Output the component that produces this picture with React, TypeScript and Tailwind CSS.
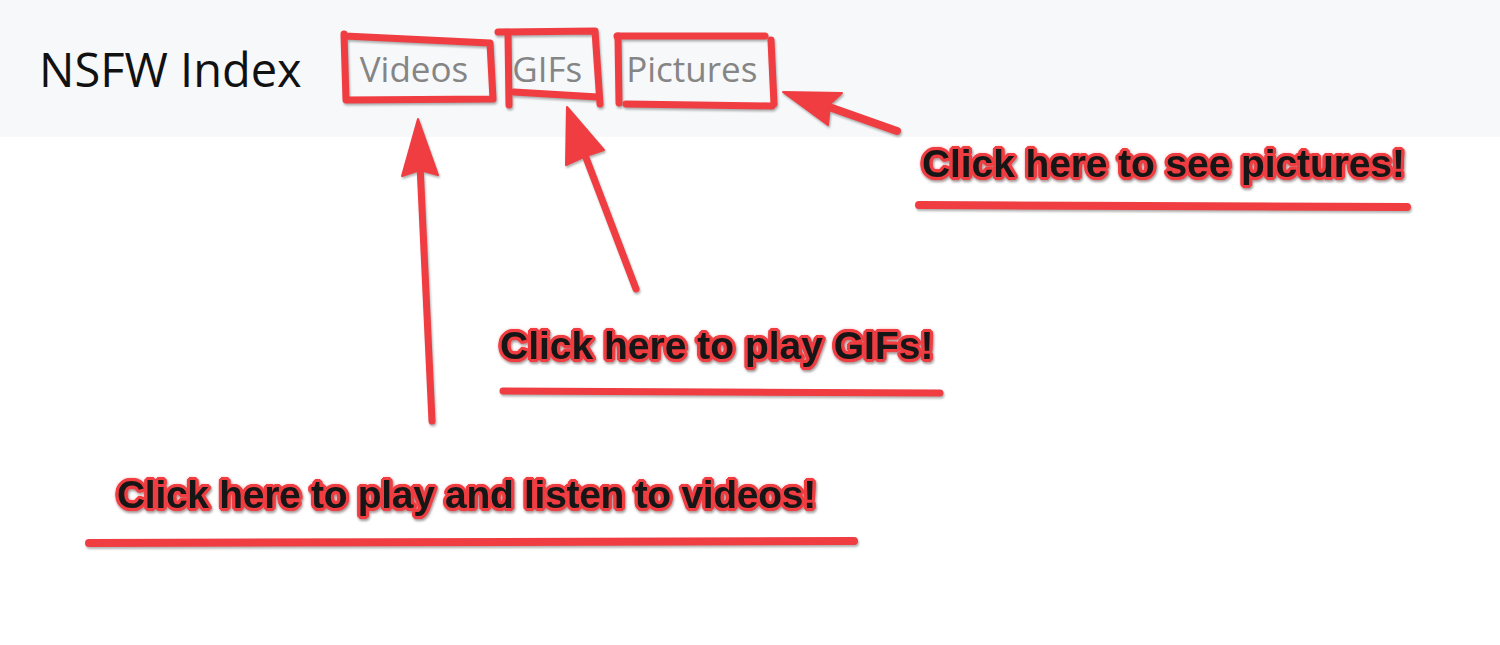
import React from "react";

const RED = "#ef3d41";

const outline =
  "[text-shadow:3px_0_0_#ef3d41,-3px_0_0_#ef3d41,0_3px_0_#ef3d41,0_-3px_0_#ef3d41,2px_2px_0_#ef3d41,-2px_-2px_0_#ef3d41,2px_-2px_0_#ef3d41,-2px_2px_0_#ef3d41,3px_1px_0_#ef3d41,-3px_1px_0_#ef3d41,1px_3px_0_#ef3d41,1px_-3px_0_#ef3d41,3px_-1px_0_#ef3d41,-3px_-1px_0_#ef3d41,-1px_3px_0_#ef3d41,-1px_-3px_0_#ef3d41,0_0_5px_#ef3d41,0_0_5px_#ef3d41]";

function Label({ text, className }: { text: string; className: string }) {
  return (
    <div
      className={`absolute whitespace-nowrap text-[39px] leading-none font-bold text-[#161616] ${outline} [filter:drop-shadow(1px_2px_1px_rgba(0,0,0,0.35))] ${className}`}
      style={{ fontFamily: '"Liberation Sans", Arial, sans-serif' }}
    >
      {text}
    </div>
  );
}

function Annotations() {
  return (
    <svg
      className="absolute inset-0 pointer-events-none [filter:drop-shadow(1px_2px_1px_rgba(0,0,0,0.3))]"
      width="1500"
      height="645"
      viewBox="0 0 1500 645"
    >
      <g fill="none" stroke={RED} strokeWidth="7" strokeLinecap="round" strokeLinejoin="round">
        {/* Videos box */}
        <path d="M345 36 L490 43 L493 99 L346 100 L344 34" />
        {/* GIFs box */}
        <path d="M498 32 L595 31 L600 104" />
        <path d="M508 33 L509 105" />
        <path d="M514 92 L598 97" />
        {/* Pictures box */}
        <path d="M617 36 L765 36" />
        <path d="M618 36 L619 103" />
        <path d="M626 104 L772 106" />
        <path d="M771 40 L774 104" />
        {/* underlines */}
        <path d="M919 205 L1407 207" strokeWidth="8" />
        <path d="M503 391 L940 393" strokeWidth="7" />
        <path d="M89 543 L854 541" strokeWidth="8" />
        {/* arrow shafts */}
        <path d="M432 421 L420 165" strokeWidth="7" />
        <path d="M636 289 L585 155" strokeWidth="7" />
        <path d="M897 131 L832 108" strokeWidth="8" />
      </g>
      <g fill={RED} stroke={RED} strokeWidth="2" strokeLinejoin="round">
        <path d="M418 119 L438 175 L420 170 L402 176 Z" />
        <path d="M567 107 L604 150 L586 156 L566 165 Z" />
        <path d="M783 92 L842 93 L830 104 L828 125 Z" />
      </g>
    </svg>
  );
}

export default function App() {
  return (
    <div className="relative w-[1500px] h-[645px] bg-white overflow-hidden">
      <nav
        className="flex items-center h-[137px] pl-[39px] bg-[#f7f8fa]"
        style={{ fontFamily: '"Open Sans", "Noto Sans", sans-serif' }}
      >
        <span className="text-[47px] leading-none text-[#111] mt-[2px]">NSFW Index</span>
        <div className="flex items-center ml-[58px] gap-[44px] text-[35px] leading-none text-[#858585]">
          <a>Videos</a>
          <a>GIFs</a>
          <a>Pictures</a>
        </div>
      </nav>
      <Annotations />
      <Label text="Click here to see pictures!" className="left-[922px] top-[144px] tracking-[-0.1px]" />
      <Label text="Click here to play GIFs!" className="left-[500px] top-[326px] tracking-[0px]" />
      <Label text="Click here to play and listen to videos!" className="left-[117px] top-[475px] tracking-[-0.3px]" />
    </div>
  );
}
